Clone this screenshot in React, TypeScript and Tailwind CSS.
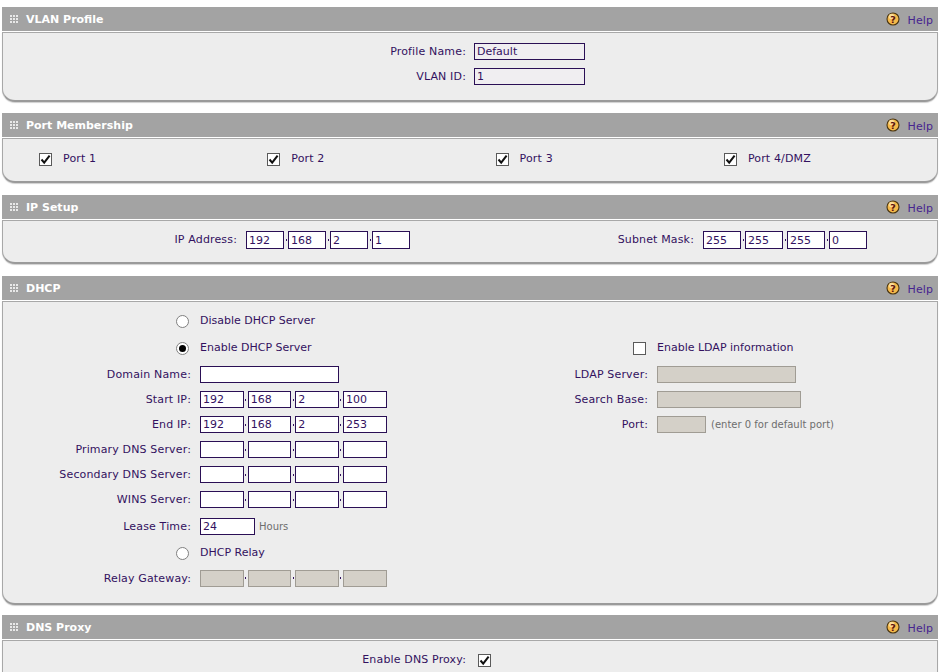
const LABEL = 'text-right text-[11px] tracking-[0.15px] text-[#33115f]'
const DOWN = 'pt-[2px]'
const FIELD = 'h-[17px] border border-[#2a0f55] bg-white px-[2px] text-[11px] text-[#33115f] outline-none'
const PALE = 'h-[17px] border border-[#2a0f55] bg-[#f0eef1] px-[2px] text-[11px] text-[#33115f] outline-none'
const TALL = 'h-[18px] border border-[#2a0f55] bg-white px-[2px] text-[11px] text-[#33115f] outline-none'
const OFF = 'h-[17px] border border-[#a09c94] bg-[#d4d0c8] px-[2px] text-[11px] outline-none'

function Grip() {
  return (
    <svg width="9" height="9" viewBox="0 0 9 9" className="mr-[7px] shrink-0">
      {[0, 3, 6].map((y) => [0, 3, 6].map((x) => <rect key={`${x}-${y}`} x={x} y={y} width="2" height="2" fill="#e8e8e8" />))}
    </svg>
  )
}

function HelpIcon() {
  return (
    <svg width="14" height="14" viewBox="0 0 14 14" className="shrink-0">
      <circle cx="7" cy="7" r="6" fill="#f5b94a" stroke="#4a3510" strokeWidth="1.1" />
      <circle cx="5.5" cy="4.5" r="2.8" fill="#fbdc94" />
      <text x="7" y="10.5" textAnchor="middle" fontSize="9.5" fontWeight="700" fontFamily="'DejaVu Sans', sans-serif" fill="#5a1010">?</text>
    </svg>
  )
}

function Panel({ title, className, children }: { title: string; className: string; children: React.ReactNode }) {
  return (
    <section className="mx-[2px] w-[936px]">
      <div className="flex h-[24px] items-center bg-[#a3a3a3] pl-[8px] pr-[5px]">
        <Grip />
        <span className="mt-[2px] text-[11px] font-bold text-white">{title}</span>
        <span className="ml-auto flex items-center">
          <HelpIcon />
          <span className="ml-[8px] mt-[5px] text-[11px] tracking-[0.1px] text-[#47248f]">Help</span>
        </span>
      </div>
      <div className={`mt-[1px] rounded-b-[13px] border border-b-2 border-[#a8a8a8] border-b-[#9a9a9a] bg-[#ededed] shadow-[0_1px_1px_#d0d0d0] ${className}`}>
        {children}
      </div>
    </section>
  )
}

function Check({ on = true }: { on?: boolean }) {
  return (
    <span className="flex h-[13px] w-[13px] shrink-0 items-center justify-center border border-[#5a5a5a] bg-white">
      {on && (
        <svg width="11" height="11" viewBox="0 0 11 11">
          <path d="M1.5 5.5 L4.2 8.6 L9.6 1.6" fill="none" stroke="#111" strokeWidth="2" />
        </svg>
      )}
    </span>
  )
}

function Radio({ on = false }: { on?: boolean }) {
  return (
    <span className="flex h-[13px] w-[13px] items-center justify-center rounded-full border border-[#808080] bg-white">
      {on && <span className="h-[7px] w-[7px] rounded-full bg-black" />}
    </span>
  )
}

function IpGroup({ values, width, style = FIELD }: { values: string[]; width: string; style?: string }) {
  return (
    <div className="flex items-center">
      {values.map((v, i) => (
        <div key={i} className="flex items-center">
          {i > 0 && (
            <span className="flex w-[4px] justify-center">
              <span className="h-[2px] w-[1px] bg-[#33115f]" />
            </span>
          )}
          <input readOnly value={v} className={`${style} ${width}`} />
        </div>
      ))}
    </div>
  )
}

function Row({ label, h, children }: { label?: string; h: string; children: React.ReactNode }) {
  return (
    <div className={`flex items-center ${h}`}>
      <span className={`w-[188px] ${LABEL} ${DOWN}`}>{label}</span>
      <div className="ml-[9px] flex items-center">{children}</div>
    </div>
  )
}

function RightRow({ label, h, children }: { label?: string; h: string; children: React.ReactNode }) {
  return (
    <div className={`flex items-center ${h}`}>
      <span className={`w-[205px] ${LABEL} ${DOWN}`}>{label}</span>
      <div className="ml-[9px] flex items-center">{children}</div>
    </div>
  )
}

const EMPTY = ['', '', '', '']
const W44 = 'w-[43.67px]'

export default function App() {
  return (
    <div className="h-[672px] overflow-hidden bg-white pt-[7px] font-['DejaVu_Sans',Verdana,sans-serif]">
      <Panel title="VLAN Profile" className="h-[70px] pt-[10px]">
        <div className="flex h-[17px] items-center">
          <span className={`w-[463px] ${LABEL} ${DOWN}`}>Profile Name:</span>
          <input readOnly value="Default" className={`ml-[8px] w-[111px] ${PALE}`} />
        </div>
        <div className="mt-[8px] flex h-[17px] items-center">
          <span className={`w-[463px] ${LABEL} ${DOWN}`}>VLAN ID:</span>
          <input readOnly value="1" className={`ml-[8px] w-[111px] ${PALE}`} />
        </div>
      </Panel>

      <div className="mt-[11px]">
        <Panel title="Port Membership" className="h-[45px] pl-[36px] pt-[12px]">
          <div className="grid grid-cols-[228.3px_228.3px_228.3px_1fr]">
            {['Port 1', 'Port 2', 'Port 3', 'Port 4/DMZ'].map((p) => (
              <div key={p} className="flex items-center">
                <Check />
                <span className="ml-[11px] text-[11px] tracking-[0.15px] text-[#33115f]">{p}</span>
              </div>
            ))}
          </div>
        </Panel>
      </div>

      <div className="mt-[12px]">
        <Panel title="IP Setup" className="h-[44px] pt-[10px]">
          <div className="flex items-center">
            <span className={`w-[234px] ${LABEL}`}>IP Address:</span>
            <div className="ml-[9px]"><IpGroup values={['192', '168', '2', '1']} width="w-[38px]" style={TALL} /></div>
            <span className={`w-[284px] ${LABEL}`}>Subnet Mask:</span>
            <div className="ml-[9px]"><IpGroup values={['255', '255', '255', '0']} width="w-[38px]" style={TALL} /></div>
          </div>
        </Panel>
      </div>

      <div className="mt-[12px]">
        <Panel title="DHCP" className="flex h-[304px] pt-[6px]">
          <div className="w-[440px] shrink-0">
            <Row h="h-[26px]"><span className="ml-[-24px] w-[24px]"><Radio /></span><span className="text-[11px] text-[#33115f]">Disable DHCP Server</span></Row>
            <Row h="h-[28px]"><span className="ml-[-24px] w-[24px]"><Radio on /></span><span className="text-[11px] text-[#33115f]">Enable DHCP Server</span></Row>
            <Row label="Domain Name:" h="h-[25px]"><input readOnly className={`w-[139px] ${FIELD}`} /></Row>
            <Row label="Start IP:" h="h-[25px]"><IpGroup values={['192', '168', '2', '100']} width={W44} /></Row>
            <Row label="End IP:" h="h-[25px]"><IpGroup values={['192', '168', '2', '253']} width={W44} /></Row>
            <Row label="Primary DNS Server:" h="h-[25px]"><IpGroup values={EMPTY} width={W44} /></Row>
            <Row label="Secondary DNS Server:" h="h-[25px]"><IpGroup values={EMPTY} width={W44} /></Row>
            <Row label="WINS Server:" h="h-[25px]"><IpGroup values={EMPTY} width={W44} /></Row>
            <Row label="Lease Time:" h="h-[28px]">
              <input readOnly value="24" className={`w-[55px] ${FIELD}`} />
              <span className="ml-[4px] text-[10px] text-[#6e6e6e]">Hours</span>
            </Row>
            <Row h="h-[26px]"><span className="ml-[-24px] w-[24px]"><Radio /></span><span className="text-[11px] text-[#33115f]">DHCP Relay</span></Row>
            <Row label="Relay Gateway:" h="h-[24px]"><IpGroup values={EMPTY} width={W44} style={OFF} /></Row>
          </div>
          <div className="pt-[26px]">
            <RightRow h="h-[28px]"><span className="ml-[-24px] w-[24px]"><Check on={false} /></span><span className="text-[11px] text-[#33115f]">Enable LDAP information</span></RightRow>
            <RightRow label="LDAP Server:" h="h-[25px]"><input readOnly className={`w-[139px] ${OFF}`} /></RightRow>
            <RightRow label="Search Base:" h="h-[25px]"><input readOnly className={`w-[144px] ${OFF}`} /></RightRow>
            <RightRow label="Port:" h="h-[25px]">
              <input readOnly className={`w-[49px] ${OFF}`} />
              <span className="ml-[5px] text-[10px] text-[#6e6e6e]">(enter 0 for default port)</span>
            </RightRow>
          </div>
        </Panel>
      </div>

      <div className="mt-[10px]">
        <Panel title="DNS Proxy" className="h-[60px] pt-[11px]">
          <div className="flex items-center">
            <span className={`w-[463px] ${LABEL}`}>Enable DNS Proxy:</span>
            <span className="ml-[12px]"><Check /></span>
          </div>
        </Panel>
      </div>
    </div>
  )
}
